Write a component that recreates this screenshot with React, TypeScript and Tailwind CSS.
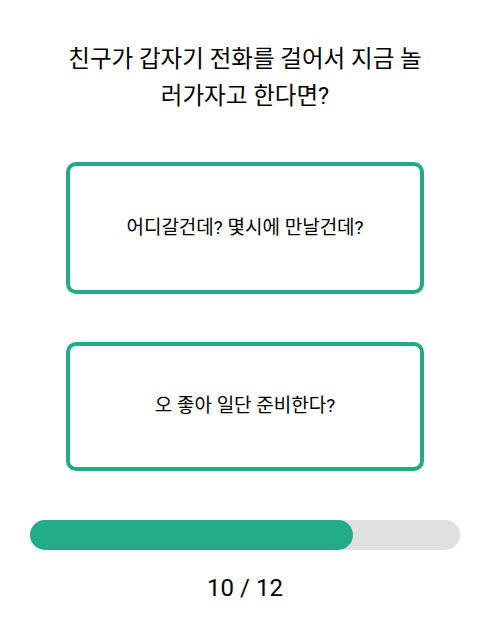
export default function App() {
  const current = 10;
  const total = 12;
  const progress = 75;
  return (
    <div
      className="w-[490px] bg-white"
      style={{ fontFamily: 'Roboto, "Noto Sans CJK KR", sans-serif' }}
    >
      <div className="flex flex-col items-center pt-[41px]">
        <h1 className="w-[356px] text-center text-[23.5px] leading-[37px] text-black">
          친구가 갑자기 전화를 걸어서 지금 놀러가자고 한다면?
        </h1>
        <div className="mt-[47px] flex flex-col gap-[48px]">
          <button className="flex h-[132px] w-[358px] items-center justify-center rounded-[10px] border-4 border-[#21ab87] bg-white text-[19px] text-black">
            어디갈건데? 몇시에 만날건데?
          </button>
          <button className="flex h-[129px] w-[358px] items-center justify-center rounded-[10px] border-4 border-[#21ab87] bg-white text-[19px] text-black">
            오 좋아 일단 준비한다?
          </button>
        </div>
      </div>
      <div className="mt-[49px] px-[30px]">
        <div className="h-[30px] w-full rounded-full bg-[#e0e0de]">
          <div
            className="h-full rounded-full bg-[#21ab87]"
            style={{ width: `${progress}%` }}
          />
        </div>
      </div>
      <p className="mt-[21px] text-center text-[24px] leading-[34px] text-black">
        {current} / {total}
      </p>
    </div>
  );
}
